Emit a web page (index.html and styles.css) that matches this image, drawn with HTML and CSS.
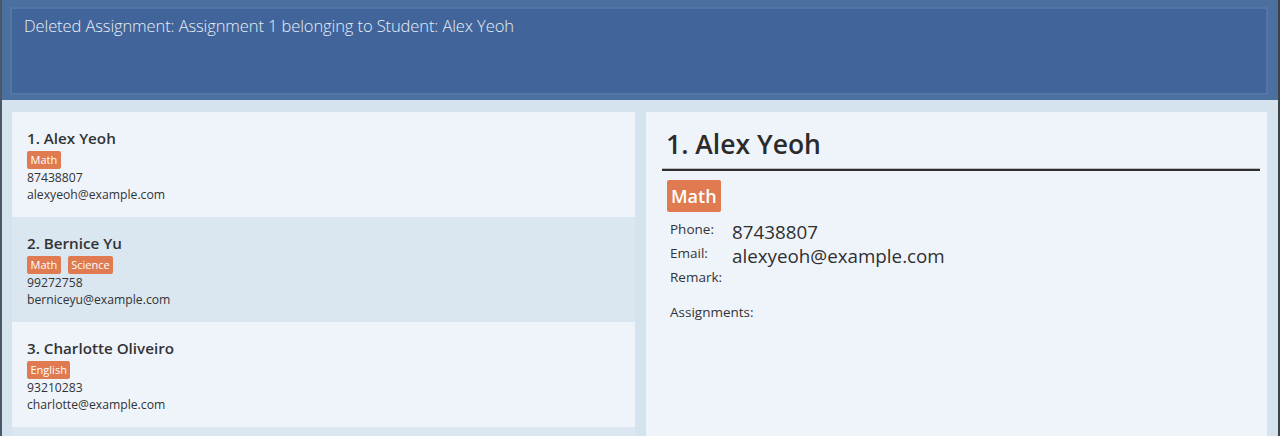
FILE: index.html
```html
<!DOCTYPE html>
<html>
<head>
<meta charset="utf-8">
<link rel="stylesheet" href="styles.css">
</head>
<body>
<div class="window">
  <div class="result-bar">
    <div class="result-box">Deleted Assignment: Assignment 1 belonging to Student: Alex Yeoh</div>
  </div>
  <div class="main">
    <div class="list">
      <div class="card">
        <div class="name">1. Alex Yeoh</div>
        <div class="tags"><span class="tag">Math</span></div>
        <div class="line">87438807</div>
        <div class="line">alexyeoh@example.com</div>
      </div>
      <div class="card alt">
        <div class="name">2. Bernice Yu</div>
        <div class="tags"><span class="tag">Math</span><span class="tag">Science</span></div>
        <div class="line">99272758</div>
        <div class="line">berniceyu@example.com</div>
      </div>
      <div class="card">
        <div class="name">3. Charlotte Oliveiro</div>
        <div class="tags"><span class="tag">English</span></div>
        <div class="line">93210283</div>
        <div class="line">charlotte@example.com</div>
      </div>
    </div>
    <div class="detail">
      <div class="d-name">1. Alex Yeoh</div>
      <div class="d-tags"><span class="d-tag">Math</span></div>
      <div class="fields">
        <div class="row"><span class="label">Phone:</span><span class="value">87438807</span></div>
        <div class="row"><span class="label">Email:</span><span class="value">alexyeoh@example.com</span></div>
        <div class="row"><span class="label">Remark:</span><span class="value"></span></div>
      </div>
      <div class="assign">Assignments:</div>
    </div>
  </div>
</div>
</body>
</html>
```

FILE: styles.css
```css
html, body {
  margin: 0;
  padding: 0;
}
body {
  width: 1280px;
  height: 436px;
  overflow: hidden;
  font-family: "Open Sans", "Noto Sans", sans-serif;
}
.window {
  height: 436px;
  border-left: 2px solid #4a5866;
  border-right: 2px solid #3c4349;
  background: #d5e3ee;
  box-sizing: border-box;
}
.result-bar {
  height: 100px;
  box-sizing: border-box;
  background: #4b6f9f;
  padding: 7px 10px 5px 8px;
}
.result-box {
  height: 88px;
  box-sizing: border-box;
  background: #41659a;
  border: 2px solid #5476a6;
  color: #e8eef7;
  font-size: 16.5px;
  font-weight: 300;
  line-height: 22px;
  padding: 6px 12px;
  letter-spacing: -0.1px;
}
.main {
  display: flex;
  gap: 11px;
  padding: 12px 11px 0 10px;
}
.list {
  width: 623px;
  background: #dae6f0;
  height: 324px;
  display: flex;
  flex-direction: column;
}
.card {
  height: 105px;
  box-sizing: border-box;
  background: #eff4fb;
  padding: 16px 15px 0 15px;
  color: #2f2f2f;
}
.card.alt {
  background: #dae6f0;
}
.name {
  font-size: 15.2px;
  font-weight: 600;
  line-height: 20px;
  color: #333;
}
.tags {
  display: flex;
  gap: 7px;
  margin-top: 3px;
}
.tag {
  background: #e07a50;
  color: #fff;
  font-size: 11px;
  line-height: 18px;
  padding: 0 3.5px;
  border-radius: 2px;
}
.line {
  font-size: 12.2px;
  line-height: 17px;
  color: #333;
}
.detail {
  width: 621px;
  height: 324px;
  background: #eff4fb;
  box-sizing: border-box;
  padding: 15px 7px 0 16px;
}
.d-name {
  font-size: 26.5px;
  font-weight: 600;
  color: #2b2b2b;
  line-height: 34px;
  padding-left: 4px;
  padding-bottom: 8px;
  border-bottom: 2px solid #2e2e2e;
  box-shadow: 0 -1px 0 #bbb inset;
}
.d-tags {
  margin-top: 9px;
  padding-left: 5px;
  display: flex;
}
.d-tag {
  background: #e07a50;
  color: #fff;
  font-size: 18px;
  font-weight: 600;
  line-height: 32px;
  padding: 0 4px;
  border-radius: 2px;
}
.fields {
  margin-top: 7px;
  padding-left: 8px;
}
.row {
  display: flex;
  height: 24px;
}
.label {
  width: 62px;
  font-size: 13.5px;
  color: #333;
  line-height: 20px;
}
.value {
  font-size: 18.8px;
  color: #2f2f2f;
  line-height: 26px;
}
.assign {
  margin-top: 12px;
  padding-left: 8px;
  font-size: 13.5px;
  color: #333;
}
```
